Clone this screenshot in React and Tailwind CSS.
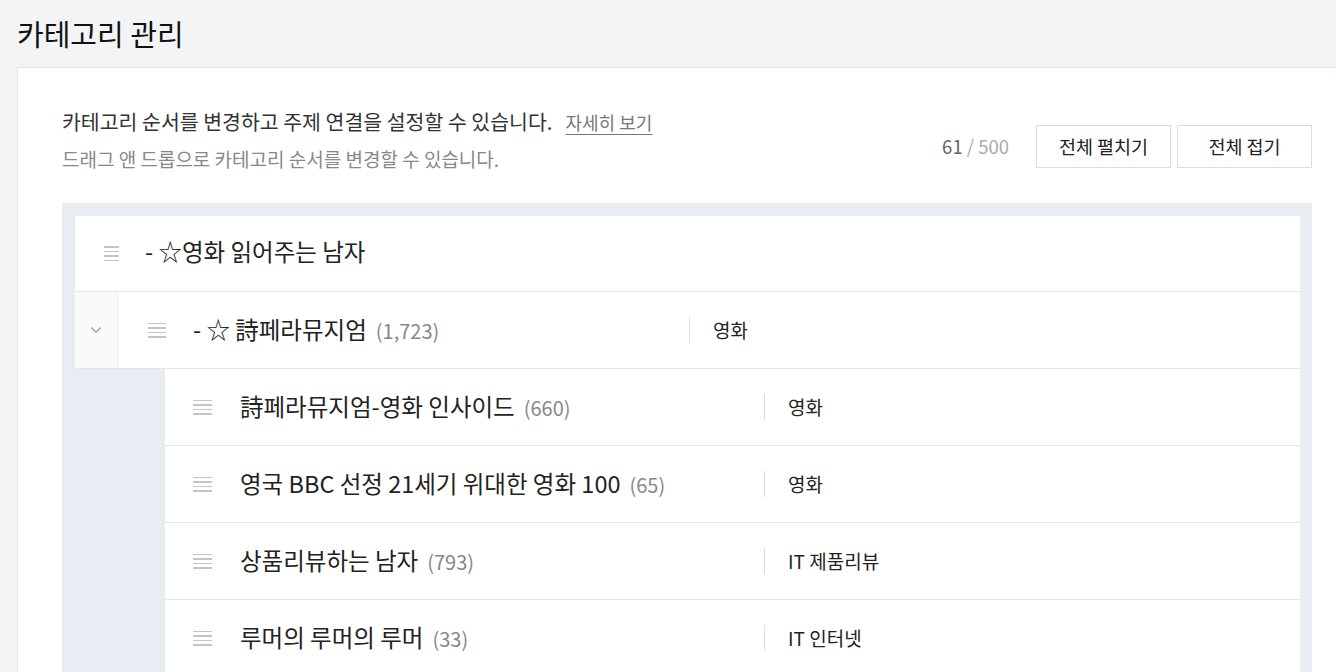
import { ChevronDown } from "lucide-react";

const children = [
  { name: "詩페라뮤지엄-영화 인사이드", count: "660", topic: "영화" },
  { name: "영국 BBC 선정 21세기 위대한 영화 100", count: "65", topic: "영화" },
  { name: "상품리뷰하는 남자", count: "793", topic: "IT 제품리뷰" },
  { name: "루머의 루머의 루머", count: "33", topic: "IT 인터넷" },
];

const DragHandle = ({ w = "w-[16px]" }) => (
  <div className={`flex flex-col gap-[3px] ${w}`}>
    <span className="h-[1.5px] bg-[#c4c4c4]" />
    <span className="h-[1.5px] bg-[#c4c4c4]" />
    <span className="h-[1.5px] bg-[#c4c4c4]" />
    <span className="h-[1.5px] bg-[#c4c4c4]" />
  </div>
);

const App = () => {
  return (
    <div
      className="min-h-[672px] bg-[#f3f4f6] text-[#222] overflow-hidden"
      style={{ fontFamily: '"Noto Sans CJK KR", "Noto Sans", sans-serif' }}
    >
      <h1 className="h-[67px] pl-[17px] pt-[12px] text-[29px] leading-[42px] font-normal text-[#111]">
        카테고리 관리
      </h1>

      <div className="ml-[17px] bg-white border-t border-l border-[#e1e4e8] pl-[44px] pr-[24px] pt-[39px]">
        <div className="flex justify-between items-start">
          <div>
            <p className="text-[20.5px] leading-[28px] text-[#333]">
              카테고리 순서를 변경하고 주제 연결을 설정할 수 있습니다.
              <a className="ml-[13px] text-[18px] text-[#777] underline underline-offset-[4px]">
                자세히 보기
              </a>
            </p>
            <p className="mt-[10px] text-[19px] leading-[26px] text-[#888]">
              드래그 앤 드롭으로 카테고리 순서를 변경할 수 있습니다.
            </p>
          </div>
          <div className="flex items-center mt-[18px]">
            <span className="mr-[27px] text-[18.5px] text-[#666]">
              61 <span className="text-[#aaa]">/ 500</span>
            </span>
            <button className="w-[135px] h-[43px] border border-[#d9dce0] bg-white text-[18.5px] text-[#222]">
              전체 펼치기
            </button>
            <button className="ml-[6px] w-[135px] h-[43px] border border-[#d9dce0] bg-white text-[18.5px] text-[#222]">
              전체 접기
            </button>
          </div>
        </div>

        <div className="mt-[31px] bg-[#e8edf3] pt-[13px] pl-[13px] pr-[12px]">
          <div className="bg-white border-b border-[#e3e6ea] h-[76px] flex items-center">
            <div className="ml-[29px]">
              <DragHandle w="w-[15px]" />
            </div>
            <span className="ml-[26px] mt-[-3px] text-[23.5px] text-[#222]">- ☆영화 읽어주는 남자</span>
          </div>

          <div className="bg-white border-b border-[#e3e6ea] h-[77px] flex items-stretch">
            <div className="w-[43px] bg-[#f9fafb] border-r border-[#eceef1] flex items-center justify-center">
              <ChevronDown className="w-[18px] h-[18px] text-[#999]" strokeWidth={1.5} />
            </div>
            <div className="flex items-center">
              <div className="ml-[30px]">
                <DragHandle w="w-[18px]" />
              </div>
              <div className="ml-[27px] w-[496px] flex items-baseline">
                <span className="text-[23.5px] text-[#222]">- ☆ 詩페라뮤지엄</span>
                <span className="ml-[9px] text-[20px] text-[#888]">(1,723)</span>
              </div>
              <span className="h-[26px] border-l border-[#dcdcdc]" />
              <span className="ml-[23px] text-[19px] text-[#222]">영화</span>
            </div>
          </div>

          <div className="pl-[90px]">
            {children.map((c, i) => (
              <div
                key={i}
                className="bg-white border-b border-[#e3e6ea] h-[77px] flex items-center"
              >
                <div className="ml-[28px]">
                  <DragHandle w="w-[19px]" />
                </div>
                <div className="ml-[28px] w-[524px] flex items-baseline">
                  <span className="text-[23.5px] text-[#222]">{c.name}</span>
                  <span className="ml-[9px] text-[20px] text-[#888]">({c.count})</span>
                </div>
                <span className="h-[26px] border-l border-[#dcdcdc]" />
                <span className="ml-[23px] text-[19px] text-[#222]">{c.topic}</span>
              </div>
            ))}
          </div>
        </div>
      </div>
    </div>
  );
};

export default App;
